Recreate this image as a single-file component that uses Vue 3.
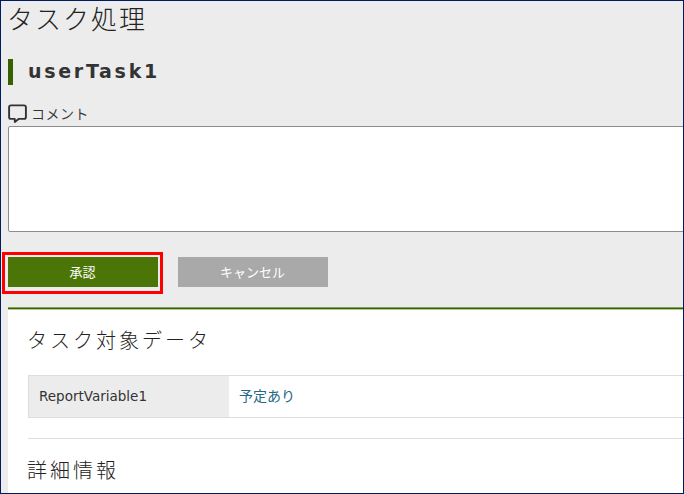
<script setup>
const rows = [{ name: 'ReportVariable1', value: '予定あり' }]
</script>

<template>
  <main class="page">
    <h1 class="title">タスク処理</h1>
    <h2 class="task"><span class="task-name">userTask1</span></h2>
    <label class="comment-label" for="comment">
      <svg class="bubble" viewBox="0 0 20 20" width="20" height="20" aria-hidden="true">
        <path d="M3 1.4H16Q17.9 1.4 17.9 3.3V13Q17.9 14.9 16 14.9H10.6L6.8 18V14.9H3Q1.1 14.9 1.1 13V3.3Q1.1 1.4 3 1.4Z" />
      </svg>
      <span class="comment-text">コメント</span>
    </label>
    <textarea id="comment" class="comment"></textarea>
    <div class="actions">
      <div class="marked"><button class="btn approve">承認</button></div>
      <button class="btn cancel">キャンセル</button>
    </div>
    <section class="panel">
      <h3 class="heading data-heading">タスク対象データ</h3>
      <dl v-for="row in rows" :key="row.name" class="row">
        <dt><span class="variable">{{ row.name }}</span></dt>
        <dd><a>{{ row.value }}</a></dd>
      </dl>
      <hr class="divider" />
      <h3 class="heading">詳細情報</h3>
    </section>
  </main>
</template>

<style>
body {
  margin: 0;
  overflow: hidden;
}
</style>

<style scoped>
* {
  box-sizing: border-box;
}
.page {
  width: 684px;
  height: 494px;
  display: flex;
  flex-direction: column;
  padding-left: 7px;
  overflow: hidden;
  border: 1px solid #001b5e;
  background: #ececec;
  color: #333;
  font-family: "Noto Sans CJK JP", "Noto Sans", sans-serif;
  font-size: 14px;
}
h1, h2, h3, dl, dd {
  margin: 0;
}
.title {
  height: 36px;
  margin-left: -1px;
  line-height: 34px;
  color: #222;
  font-size: 26px;
  font-weight: 300;
  letter-spacing: 2px;
  white-space: nowrap;
}
.task {
  margin-top: 22px;
  height: 26px;
  padding-left: 15px;
  border-left: 5px solid #396000;
  line-height: 24px;
  font-family: "DejaVu Sans", sans-serif;
  font-size: 19px;
  font-weight: 700;
}
.task-name {
  letter-spacing: 2.7px;
}
.comment-label {
  margin-top: 18px;
  height: 23px;
  display: flex;
  align-items: flex-start;
  gap: 3px;
}
.bubble {
  margin-top: 1px;
  fill: none;
  stroke: #333;
  stroke-width: 1.9;
  stroke-linejoin: round;
}
.comment-text {
  line-height: 21px;
  font-weight: 350;
  letter-spacing: 0.5px;
}
.comment {
  width: 700px;
  height: 106px;
  flex: none;
  resize: none;
  outline: none;
  border: 1px solid #8c8c8c;
  border-radius: 2px;
  background: #fff;
}
.actions {
  display: flex;
  align-items: flex-start;
  gap: 15px;
  margin: 20px 0 0 -6px;
}
.marked {
  padding: 2px 2px 4px 3px;
  border: 3px solid #f00;
}
.btn {
  display: block;
  width: 150px;
  height: 30px;
  padding: 0 1px 1px 0;
  border: 0;
  color: #fff;
  font: 400 13px/28px "Noto Sans CJK JP", sans-serif;
}
.approve {
  background: #4b7607;
}
.cancel {
  margin-top: 5px;
  background: #a9a9a9;
}
.panel {
  flex: 1;
  margin-top: 13px;
  padding: 1px 0 0 20px;
  border-top: 1px solid #86a45d;
  background: #fff;
  box-shadow: inset 0 1px #396000, inset 0 2px #b5cc95;
}
.heading {
  height: 34px;
  margin-left: -1px;
  line-height: 34px;
  color: #222;
  font-size: 20px;
  font-weight: 300;
  letter-spacing: 3px;
  white-space: nowrap;
}
.data-heading {
  margin: 14px 0 18px -1px;
}
.row {
  width: 700px;
  height: 43px;
  display: flex;
  border: 1px solid #ddd;
}
.row dt,
.row dd {
  padding-left: 10px;
  line-height: 39px;
}
.row dt {
  width: 200px;
  background: #ececec;
}
.variable {
  font-family: "DejaVu Sans", sans-serif;
  font-size: 13.5px;
  letter-spacing: 0;
}
.row a {
  color: #236985;
}
.divider {
  width: 700px;
  height: 1px;
  margin: 20px 0 14px;
  border: 0;
  background: #ddd;
}
</style>
